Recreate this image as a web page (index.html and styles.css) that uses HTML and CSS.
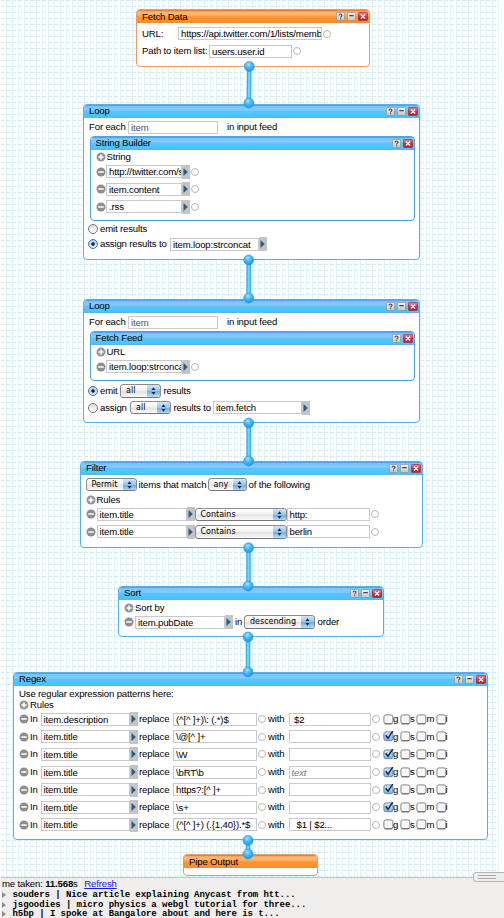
FILE: index.html
```html
<!DOCTYPE html>
<html lang="en">
<head>
<meta charset="utf-8">
<title>Pipe editor</title>
<link rel="stylesheet" href="styles.css">
</head>
<body>
<svg class="defs" width="0" height="0" aria-hidden="true">
  <defs>
    <radialGradient id="ball" cx=".42" cy=".3" r=".7"><stop offset="0" stop-color="#a4e2ff"/><stop offset=".45" stop-color="#48b9f8"/><stop offset="1" stop-color="#1e97e6"/></radialGradient>
    <linearGradient id="grey" x2="0" y2="1"><stop offset="0" stop-color="#f6f6f6"/><stop offset="1" stop-color="#c4c4c4"/></linearGradient>
    <linearGradient id="red" x2="0" y2="1"><stop offset="0" stop-color="#e98a94"/><stop offset=".5" stop-color="#d43343"/><stop offset="1" stop-color="#b91828"/></linearGradient>
    <linearGradient id="tick" x2="0" y2="1"><stop offset="0" stop-color="#d5e8f8"/><stop offset="1" stop-color="#79b3e6"/></linearGradient>
    <symbol id="help" viewBox="0 0 9 9"><rect x=".4" y=".4" width="8.2" height="8.2" rx="1" fill="url(#grey)" stroke="#8c9298" stroke-width=".8"/><path d="M3 3.4C3 1.6 6 1.6 6 3.3 6 4.4 4.6 4.3 4.6 5.4M4.6 6.3v1" fill="none" stroke="#444" stroke-width="1.1"/></symbol>
    <symbol id="min" viewBox="0 0 9 9"><rect x=".4" y=".4" width="8.2" height="8.2" rx="1" fill="url(#grey)" stroke="#8c9298" stroke-width=".8"/><path d="M2.3 3.6h4.4" stroke="#444" stroke-width="1.1"/></symbol>
    <symbol id="close" viewBox="0 0 10 9"><rect x=".4" y=".4" width="9.2" height="8.2" rx="1" fill="url(#red)" stroke="#b4283a" stroke-width=".8"/><path d="M2.9 2.6l4.2 3.8M7.1 2.6L2.9 6.4" stroke="#fff" stroke-width="1.4"/></symbol>
    <symbol id="plus" viewBox="0 0 10 10"><circle cx="5" cy="5" r="4.5" fill="#969696"/><path d="M5 2.4v5.2M2.4 5h5.2" stroke="#fff" stroke-width="1.6"/></symbol>
    <symbol id="minus" viewBox="0 0 10 10"><circle cx="5" cy="5" r="4.5" fill="#8e8e8e"/><path d="M2.3 5h5.4" stroke="#fff" stroke-width="1.7"/></symbol>
    <symbol id="arrow" viewBox="0 0 8 14"><path d="M0 0h8v14H0z" fill="#c4c4c4"/><path d="M1.5 3l4.3 4-4.3 4z" fill="#20608e"/></symbol>
    <symbol id="updown" viewBox="0 0 6 8"><path d="M3 .3L5 3.1H1zM3 7.7L1 4.9h4z" fill="#152a45"/></symbol>
    <symbol id="box" viewBox="0 0 11 11"><rect x=".9" y=".9" width="9" height="8.8" rx="2" fill="#f7f7f7" stroke="#777" stroke-width=".9"/><path d="M1.5 9.9h7.8" stroke="#555" stroke-width=".8"/></symbol>
    <symbol id="checked" viewBox="0 0 11 11"><rect x=".9" y=".9" width="9" height="8.8" rx="2" fill="url(#tick)" stroke="#5b7fa8" stroke-width=".9"/><path d="M2.7 4.3L5 7.3 9.8 0" fill="none" stroke="#17283f" stroke-width="1.5"/></symbol>
  </defs>
</svg>

<main class="canvas">
  <section class="node orange fetch-data">
    <header class="title">Fetch Data<span class="tools"><svg class="t"><use href="#help"/></svg><svg class="t"><use href="#min"/></svg><svg class="x"><use href="#close"/></svg></span></header>
    <div class="row url"><span>URL:</span><span class="field">https://api.twitter.com/1/lists/memb</span><i class="ring"></i></div>
    <div class="row path"><span>Path to item list:</span><span class="field">users.user.id</span><i class="ring"></i></div>
  </section>

  <section class="node loop-a">
    <header class="title">Loop<span class="tools"><svg class="t"><use href="#help"/></svg><svg class="t"><use href="#min"/></svg><svg class="x"><use href="#close"/></svg></span></header>
    <div class="row each"><span>For each</span><span class="field dim">item</span><span>in input feed</span></div>
    <div class="inner tall">
      <header class="title">String Builder<span class="tools"><svg class="t"><use href="#help"/></svg><svg class="x"><use href="#close"/></svg></span></header>
      <div class="row add"><svg><use href="#plus"/></svg><span>String</span></div>
      <div class="row part"><svg><use href="#minus"/></svg><span class="field">http://twitter.com/s</span><svg class="arrow"><use href="#arrow"/></svg><i class="ring"></i></div>
      <div class="row part"><svg><use href="#minus"/></svg><span class="field">item.content</span><svg class="arrow"><use href="#arrow"/></svg><i class="ring"></i></div>
      <div class="row part"><svg><use href="#minus"/></svg><span class="field">.rss</span><svg class="arrow"><use href="#arrow"/></svg><i class="ring"></i></div>
    </div>
    <div class="row emit-a"><i class="radio"></i><span>emit results</span></div>
    <div class="row assign-a"><i class="radio on"></i><span>assign results to</span><span class="field">item.loop:strconcat</span><svg class="arrow"><use href="#arrow"/></svg></div>
  </section>

  <section class="node loop-b">
    <header class="title">Loop<span class="tools"><svg class="t"><use href="#help"/></svg><svg class="t"><use href="#min"/></svg><svg class="x"><use href="#close"/></svg></span></header>
    <div class="row each"><span>For each</span><span class="field dim">item</span><span>in input feed</span></div>
    <div class="inner short">
      <header class="title">Fetch Feed<span class="tools"><svg class="t"><use href="#help"/></svg><svg class="x"><use href="#close"/></svg></span></header>
      <div class="row add"><svg><use href="#plus"/></svg><span>URL</span></div>
      <div class="row part"><svg><use href="#minus"/></svg><span class="field">item.loop:strconca</span><svg class="arrow"><use href="#arrow"/></svg><i class="ring"></i></div>
    </div>
    <div class="row emit-b"><i class="radio on"></i><span>emit</span><span class="select"><b>all</b><svg><use href="#updown"/></svg></span><span>results</span></div>
    <div class="row assign-b"><i class="radio"></i><span>assign</span><span class="select"><b>all</b><svg><use href="#updown"/></svg></span><span>results to</span><span class="field">item.fetch</span><svg class="arrow"><use href="#arrow"/></svg></div>
  </section>

  <section class="node filter">
    <header class="title">Filter<span class="tools"><svg class="t"><use href="#help"/></svg><svg class="t"><use href="#min"/></svg><svg class="x"><use href="#close"/></svg></span></header>
    <div class="row match"><span class="select"><b>Permit</b><svg><use href="#updown"/></svg></span><span>items that match</span><span class="select"><b>any</b><svg><use href="#updown"/></svg></span><span>of the following</span></div>
    <div class="row add"><svg><use href="#plus"/></svg><span>Rules</span></div>
    <div class="row rule"><svg><use href="#minus"/></svg><span class="field">item.title</span><svg class="arrow"><use href="#arrow"/></svg><span class="select"><b>Contains</b><svg><use href="#updown"/></svg></span><span class="field">http:</span><i class="ring"></i></div>
    <div class="row rule"><svg><use href="#minus"/></svg><span class="field">item.title</span><svg class="arrow"><use href="#arrow"/></svg><span class="select"><b>Contains</b><svg><use href="#updown"/></svg></span><span class="field">berlin</span><i class="ring"></i></div>
  </section>

  <section class="node sort">
    <header class="title">Sort<span class="tools"><svg class="t"><use href="#help"/></svg><svg class="t"><use href="#min"/></svg><svg class="x"><use href="#close"/></svg></span></header>
    <div class="row add"><svg><use href="#plus"/></svg><span>Sort by</span></div>
    <div class="row key"><svg><use href="#minus"/></svg><span class="field">item.pubDate</span><svg class="arrow"><use href="#arrow"/></svg><span>in</span><span class="select"><b>descending</b><svg><use href="#updown"/></svg></span><span>order</span></div>
  </section>

  <section class="node regex">
    <header class="title">Regex<span class="tools"><svg class="t"><use href="#help"/></svg><svg class="t"><use href="#min"/></svg><svg class="x"><use href="#close"/></svg></span></header>
    <div class="row hint"><span>Use regular expression patterns here:</span></div>
    <div class="row add"><svg><use href="#plus"/></svg><span>Rules</span></div>
    <div class="row sub"><svg><use href="#minus"/></svg><span>In</span><span class="field">item.description</span><svg class="arrow"><use href="#arrow"/></svg><span>replace</span><span class="field">(^[^ ]+)\: (.*)$</span><i class="ring"></i><span>with</span><span class="field">&nbsp;$2</span><i class="ring"></i><svg class="cb"><use href="#box"/></svg><span>g</span><svg class="cb"><use href="#box"/></svg><span>s</span><svg class="cb"><use href="#box"/></svg><span>m</span><svg class="cb"><use href="#box"/></svg><span>i</span></div>
    <div class="row sub"><svg><use href="#minus"/></svg><span>In</span><span class="field">item.title</span><svg class="arrow"><use href="#arrow"/></svg><span>replace</span><span class="field">\@[^ ]+</span><i class="ring"></i><span>with</span><span class="field"></span><i class="ring"></i><svg class="cb"><use href="#checked"/></svg><span>g</span><svg class="cb"><use href="#box"/></svg><span>s</span><svg class="cb"><use href="#box"/></svg><span>m</span><svg class="cb"><use href="#box"/></svg><span>i</span></div>
    <div class="row sub"><svg><use href="#minus"/></svg><span>In</span><span class="field">item.title</span><svg class="arrow"><use href="#arrow"/></svg><span>replace</span><span class="field">\W</span><i class="ring"></i><span>with</span><span class="field"></span><i class="ring"></i><svg class="cb"><use href="#checked"/></svg><span>g</span><svg class="cb"><use href="#box"/></svg><span>s</span><svg class="cb"><use href="#box"/></svg><span>m</span><svg class="cb"><use href="#box"/></svg><span>i</span></div>
    <div class="row sub"><svg><use href="#minus"/></svg><span>In</span><span class="field">item.title</span><svg class="arrow"><use href="#arrow"/></svg><span>replace</span><span class="field">\bRT\b</span><i class="ring"></i><span>with</span><span class="field empty">text</span><i class="ring"></i><svg class="cb"><use href="#checked"/></svg><span>g</span><svg class="cb"><use href="#box"/></svg><span>s</span><svg class="cb"><use href="#box"/></svg><span>m</span><svg class="cb"><use href="#box"/></svg><span>i</span></div>
    <div class="row sub"><svg><use href="#minus"/></svg><span>In</span><span class="field">item.title</span><svg class="arrow"><use href="#arrow"/></svg><span>replace</span><span class="field">https?:[^ ]+</span><i class="ring"></i><span>with</span><span class="field"></span><i class="ring"></i><svg class="cb"><use href="#checked"/></svg><span>g</span><svg class="cb"><use href="#box"/></svg><span>s</span><svg class="cb"><use href="#box"/></svg><span>m</span><svg class="cb"><use href="#box"/></svg><span>i</span></div>
    <div class="row sub"><svg><use href="#minus"/></svg><span>In</span><span class="field">item.title</span><svg class="arrow"><use href="#arrow"/></svg><span>replace</span><span class="field">\s+</span><i class="ring"></i><span>with</span><span class="field"></span><i class="ring"></i><svg class="cb"><use href="#checked"/></svg><span>g</span><svg class="cb"><use href="#box"/></svg><span>s</span><svg class="cb"><use href="#box"/></svg><span>m</span><svg class="cb"><use href="#box"/></svg><span>i</span></div>
    <div class="row sub"><svg><use href="#minus"/></svg><span>In</span><span class="field">item.title</span><svg class="arrow"><use href="#arrow"/></svg><span>replace</span><span class="field">(^[^ ]+) (.{1,40}).*$</span><i class="ring"></i><span>with</span><span class="field">&nbsp; $1 | $2...</span><i class="ring"></i><svg class="cb"><use href="#box"/></svg><span>g</span><svg class="cb"><use href="#box"/></svg><span>s</span><svg class="cb"><use href="#box"/></svg><span>m</span><svg class="cb"><use href="#box"/></svg><span>i</span></div>
  </section>

  <section class="node orange output">
    <header class="title">Pipe Output</header>
  </section>

  <svg class="wires" width="504" height="877" viewBox="0 0 504 877">
    <g stroke="#35aef2" stroke-width="4.6"><path d="M249.3 67L248.8 103M248.7 260V298M248.7 423V461M248.5 548V586M248 637V672M248 840V854"/></g>
    <g stroke="#7dd2fb" stroke-width="2"><path d="M249.3 67L248.8 103M248.7 260V298M248.7 423V461M248.5 548V586M248 637V672M248 840V854"/></g>
    <g fill="url(#ball)" stroke="#2595de" stroke-width=".6">
      <circle cx="249.3" cy="66.5" r="5"/><circle cx="248.8" cy="103" r="5"/>
      <circle cx="248.7" cy="260" r="5"/><circle cx="248.7" cy="298" r="5"/>
      <circle cx="248.7" cy="423" r="5"/><circle cx="248.7" cy="461" r="5"/>
      <circle cx="248.5" cy="547.8" r="5"/><circle cx="248.2" cy="586" r="5"/>
      <circle cx="248" cy="637" r="5"/><circle cx="248" cy="672" r="5"/>
      <circle cx="248" cy="840.4" r="5"/><circle cx="248" cy="854" r="5"/>
    </g>
  </svg>
</main>

<footer class="debug">
  <div class="grip"></div>
  <div class="taken">me taken: <b>11.568</b>s <a>Refresh</a></div>
  <div class="item"><i></i>souders | Nice article explaining Anycast from htt...</div>
  <div class="item"><i></i>jsgoodies | micro physics a webgl tutorial for three...</div>
  <div class="item"><i></i>h5bp | I spoke at Bangalore about and here is t...</div>
</footer>
</body>
</html>
```
FILE: styles.css
```css
* { box-sizing: border-box; }
body {
  margin: 0;
  width: 504px;
  height: 918px;
  overflow: hidden;
  background: #fff;
  color: #000;
  font: 9.6px/12px "Liberation Sans", Arial, sans-serif;
  letter-spacing: -.16px;
  white-space: nowrap;
}
.defs { position: absolute; }
svg { display: block; }

.canvas {
  position: relative;
  height: 877px;
  background:
    linear-gradient(90deg, #fff 1px, transparent 1px 498px, #fff 500px),
    repeating-linear-gradient(90deg, transparent 0 4px, rgba(255,255,255,.75) 4px 6px),
    repeating-linear-gradient(0deg, #d0edf4 0 1px, transparent 1px 6px),
    repeating-linear-gradient(90deg, #e0f4f8 0 1px, transparent 1px 6px),
    #fcffff;
}

/* modules */
.node {
  position: absolute;
  background: #fff;
  border: 1px solid #58aee8;
  border-width: 1px 1.5px 1.5px;
  border-radius: 4px;
  overflow: hidden;
}
.title {
  display: flex;
  justify-content: space-between;
  height: 12.5px;
  padding: 0 1px 0 5px;
  line-height: 12px;
  background: linear-gradient(#3b93df 0, #7ac5fb 1.5px, #86cbff 5px, #5dc2fb 6.5px, #45c8ff 11px, #58b6ed 12.5px);
}
.orange { border-color: #ed9b63; }
.orange .title { line-height: 13px; background: linear-gradient(#e96a1c 0, #ffb878 2px, #ffb269 5px, #ff9430 7px, #ff9125 11px, #ef8d3c 12.5px); }
.tools { display: flex; gap: 2px; padding-top: 1.5px; }
.tools .t { width: 9px; height: 9px; }
.tools .x { width: 10px; height: 9px; }

.fetch-data { left: 136px; top: 9px; width: 234px; height: 58px; }
.loop-a { left: 83px; top: 104px; width: 337px; height: 156px; }
.loop-b { left: 83px; top: 299px; width: 337px; height: 124px; }
.filter { left: 80px; top: 461px; width: 343px; height: 87px; }
.sort { left: 118px; top: 586px; width: 266px; height: 51px; }
.regex { left: 13px; top: 672px; width: 475px; height: 168px; }
.output { left: 183px; top: 854px; width: 135px; height: 22px; }

.inner {
  margin-left: 5.5px;
  width: 325px;
  border: 1px solid #4fa3df;
  border-radius: 4px;
  overflow: hidden;
}
.tall { height: 85px; }
.short { height: 50px; }

/* rows and controls */
.row { display: grid; align-items: center; height: 17.5px; }
.row > svg { width: 10px; height: 10px; }
.row > .arrow { width: 8px; height: 14px; }
.row > .cb { width: 11px; height: 11px; }
.field {
  height: 13px;
  padding-left: 2px;
  overflow: hidden;
  border: 1px solid #c9c9c9;
  background: #fff;
  line-height: 11px;
}
.dim { color: #555; }
.empty { color: #777; font-style: italic; }
.ring { width: 8px; height: 8px; margin-left: 1px; border: 1px solid #b8b8b8; border-radius: 50%; }
.radio { width: 10px; height: 10px; border: 1px solid #777; border-radius: 50%; background: linear-gradient(#ddd, #fff); }
.radio.on { border-color: #4a74a4; background: radial-gradient(circle, #13243c 1.4px, transparent 2px), linear-gradient(#a9cdf0, #d4ecff); }
.select {
  display: flex;
  justify-content: space-between;
  height: 13.5px;
  border: 1px solid #8b8b8b;
  border-bottom-color: #777;
  border-radius: 3.5px;
  background: linear-gradient(#fff, #f2f2f2 45%, #e2e2e2 55%, #fafafa);
  font: 8px/12px "DejaVu Sans", sans-serif;
  letter-spacing: 0;
  overflow: hidden;
}
.select b { padding-left: 5px; font-weight: normal; }
.select svg { width: 13px; height: 12px; padding: 2px 3px; background: linear-gradient(#d3e6f7, #9cc6ec 45%, #72afe3 55%, #b8e0fb); }

.url { margin-top: 2.5px; padding-left: 5px; grid-template-columns: 36px 144px 9px; }
.path { padding-left: 5px; grid-template-columns: 67px 83px 9px; }

.each { margin-top: .5px; padding-left: 5px; height: 18px; grid-template-columns: 39px 90px 1fr; }
.each span:last-child { padding-left: 9px; }
.add { padding-left: 5px; height: 13px; margin-top: 2px; grid-template-columns: 11px 1fr; }
.inner .add { margin-top: 1px; height: 12.5px; }
.part { padding-left: 5px; grid-template-columns: 10.5px 76px 7.5px 9px; }
.emit-a, .assign-a, .emit-b, .assign-b { padding-left: 4px; }
.emit-a { height: 15px; margin-top: .5px; grid-template-columns: 12px 1fr; }
.assign-a { height: 15px; grid-template-columns: 12px 70px 89px 8px; }
.emit-b { margin-top: 1px; grid-template-columns: 12px 20px 41px 1fr; }
.emit-b span:last-child, .assign-b .select + span { padding-left: 2.5px; }
.assign-b { height: 16px; grid-template-columns: 12px 30px 41px 42px 89px 8px; }

.match { margin-top: 1px; padding-left: 4.5px; height: 18px; grid-template-columns: 51px 71px 39px 1fr; }
.match .select + span { padding-left: 2px; }
.filter .add, .regex .add { margin-top: 0; height: 12px; }
.filter .add { padding-left: 4.5px; }
.rule { padding-left: 4.5px; grid-template-columns: 11px 90px 8px 92px 83px 9px; }

.key { padding-left: 5px; height: 15px; grid-template-columns: 11px 90px 10px 9px 71px 1fr; }
.key span:last-child { padding-left: 2.5px; }

.hint { margin-top: 2.5px; padding-left: 5px; height: 11px; }
.regex .add { height: 10px; margin-bottom: 1.5px; }
.sub { padding-left: 5px; height: 17.6px; grid-template-columns: 11px 10.5px 89px 9.5px 34px 84px 11px 20.5px 82.5px 12px 10px 6.5px 10.5px 6px 10.5px 9px 10px 1fr; }

.wires { position: absolute; left: 0; top: 0; }

/* debugger pane */
.debug {
  position: relative;
  height: 41px;
  margin-left: 1px;
  border-top: 1.5px solid #c6c6c6;
  background: #efeeed;
}
.grip {
  position: absolute;
  right: -3px;
  top: -6px;
  width: 34px;
  height: 10px;
  border: 1px solid #b5b5b5;
  border-radius: 3px;
  background: linear-gradient(transparent 2px, #aaa 2px 3px, transparent 3px 5px, #aaa 5px 6px, transparent 6px) 4px 0 / 18px 8px no-repeat, #eee;
}
.taken { height: 12px; padding-left: 1px; line-height: 11px; }
.taken a { margin-left: 4px; color: #1818ee; text-decoration: underline; }
.item {
  display: flex;
  align-items: center;
  height: 10.3px;
  font: bold 9px/10.3px "Liberation Mono", "Courier New", monospace;
  letter-spacing: -.06px;
}
.item:last-child { height: 7px; }
.item i { margin: 0 6.5px 0 1px; border: solid transparent; border-width: 3.5px 0 3.5px 4px; border-left-color: #8c8c8c; }
```
